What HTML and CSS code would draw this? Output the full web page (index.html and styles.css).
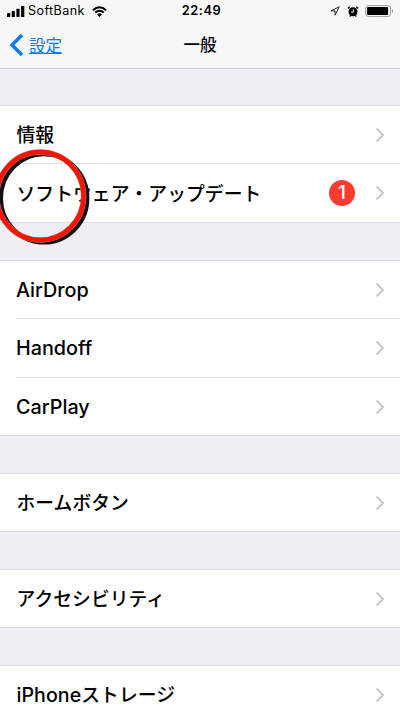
FILE: index.html
```html
<!DOCTYPE html>
<html lang="ja">
<head>
<meta charset="utf-8">
<title>一般</title>
<link rel="stylesheet" href="styles.css">
</head>
<body>
<svg width="0" height="0" class="defs"><symbol id="chev" viewBox="0 0 10 16"><path d="M1.5 1.5 8 8 1.5 14.5" fill="none" stroke="#c5c5cb" stroke-width="1.9"/></symbol></svg>
<main class="screen">
  <header class="header">
    <div class="status">
      <div class="carrier">
        <svg width="18" height="11" viewBox="0 0 18 11"><rect x="0" y="7" width="3.2" height="4" rx=".6"/><rect x="4.7" y="5" width="3.2" height="6" rx=".6"/><rect x="9.4" y="2.7" width="3.2" height="8.3" rx=".6"/><rect x="14.1" y="0" width="3.2" height="11" rx=".6"/></svg>
        <span class="carrier-name">SoftBank</span>
        <svg class="wifi" width="15" height="11" viewBox="0 0 15 11"><path d="M.9 4.2Q7.5-1.7 14.1 4.2M3.2 6.6Q7.5 2.9 11.8 6.6" fill="none" stroke="#000" stroke-width="2"/><path d="M5 8.4Q7.5 6.3 10 8.4L7.5 10.9Z"/></svg>
      </div>
      <span class="time">22:49</span>
      <div class="indicators">
        <svg width="10" height="10" viewBox="0 0 10 10"><path d="M.9 4.9 9.2.8 5.1 9.2V4.9Z" fill="none" stroke="#222" stroke-width="1"/></svg>
        <svg class="alarm" width="12" height="11" viewBox="0 0 12 11"><circle cx="6" cy="5.8" r="4.5"/><path d="M.9 2.5 2.8.8M9.2.8l1.9 1.7M2.7 10.5l1-1.2M9.3 10.5l-1-1.2" stroke="#000" stroke-width="1.3"/><path d="M6.3 3.3V6.2H4" fill="none" stroke="#f7f7f7" stroke-width="1"/></svg>
        <svg class="battery" width="29" height="12" viewBox="0 0 29 12"><rect x=".6" y=".6" width="25" height="10.8" rx="2.6" fill="#fff" stroke="#999" stroke-width="1"/><rect x="2.1" y="2" width="21" height="8" rx=".8"/><path d="M27 4Q29 6 27 8Z" fill="#888"/></svg>
      </div>
    </div>
    <nav class="nav">
      <a class="back"><svg width="15" height="24" viewBox="0 0 15 24"><path d="M13 2 3 12 13 22" fill="none" stroke="#087aff" stroke-width="3.4"/></svg><span class="back-label">設定</span></a>
      <h1 class="title">一般</h1>
      <span></span>
    </nav>
  </header>
  <section class="group">
    <div class="row"><span class="ja">情報</span><svg class="chevron"><use href="#chev"/></svg></div>
    <div class="row"><span class="ja">ソフトウェア・アップデート</span><span class="badge">1</span><svg class="chevron"><use href="#chev"/></svg></div>
    <svg class="marker" width="100" height="102" viewBox="0 0 100 102"><ellipse cx="52" cy="52.2" rx="43.2" ry="44.2" fill="none" stroke="#111" stroke-width="4.4"/><ellipse cx="48.2" cy="50" rx="43.4" ry="44" fill="none" stroke="#bb7770" stroke-width="5.4"/><ellipse cx="48.2" cy="50" rx="43.4" ry="44" fill="none" stroke="#fb1203" stroke-width="4.4"/></svg>
  </section>
  <section class="group latin">
    <div class="row"><span>AirDrop</span><svg class="chevron"><use href="#chev"/></svg></div>
    <div class="row tall"><span>Handoff</span><svg class="chevron"><use href="#chev"/></svg></div>
    <div class="row"><span>CarPlay</span><svg class="chevron"><use href="#chev"/></svg></div>
  </section>
  <section class="group single">
    <div class="row"><span class="ja">ホームボタン</span><svg class="chevron"><use href="#chev"/></svg></div>
  </section>
  <section class="group single">
    <div class="row"><span class="ja">アクセシビリティ</span><svg class="chevron"><use href="#chev"/></svg></div>
  </section>
  <section class="group single">
    <div class="row"><span class="ja mixed"><span class="word">iPhone</span>ストレージ</span><svg class="chevron"><use href="#chev"/></svg></div>
  </section>
</main>
</body>
</html>
```
FILE: styles.css
```css
* { box-sizing: border-box; }
body { margin: 0; background: #efeef4; color: #000; font-family: Inter, "Noto Sans CJK JP", sans-serif; }
svg { display: block; flex: none; }
.defs { position: absolute; }
.screen { height: 711px; overflow: hidden; }
.header { height: 69px; background: #f7f7f7; border-bottom: 1px solid #c9c8d4; }
.status { height: 22px; display: grid; grid-template-columns: 1fr auto 1fr; align-items: center; padding: 0 6px 0 7px; }
.carrier { display: flex; align-items: center; }
.carrier-name { font-size: 12.6px; line-height: 20px; margin-left: 3px; letter-spacing: .4px; font-weight: 400; }
.wifi { margin-left: 7px; }
.time { font-size: 12.8px; line-height: 20px; font-weight: 600; letter-spacing: .6px; padding-left: 2px; }
.indicators { display: flex; justify-content: flex-end; align-items: center; }
.alarm { margin-left: 7px; }
.battery { margin-left: 6px; }
.nav { height: 46px; display: grid; grid-template-columns: 1fr auto 1fr; align-items: center; padding: 0 8px; }
.back { display: flex; align-items: center; color: #087aff; font-size: 16.5px; line-height: 24px; gap: 5px; padding-left: 1px; text-decoration: underline; }
.back-label { padding-top: 1px; }
.title { font-size: 16.5px; line-height: 24px; font-weight: 500; margin: 0; }
.group { position: relative; margin-top: 36px; background: #fff; border: solid #dcdce0; border-width: 1px 0; }
.group + .group { margin-top: 37px; }
.row { height: 58px; margin-left: 16px; padding-right: 15px; display: flex; align-items: center; justify-content: space-between; border-bottom: 1px solid #e1e1e4; font-size: 18.8px; line-height: 28px; font-weight: 500; }
.row:nth-of-type(2):not(.tall) { border-bottom: 0; }
.row.tall { height: 59px; }
.latin .row:nth-of-type(3), .single .row { height: 57px; border-bottom: 0; }
.latin .row { font-size: 19.8px; font-weight: 500; }
.ja { padding: 3px 0 0 .5px; letter-spacing: .05px; }
.mixed { padding-top: 1px; }
.word { font-size: 19.6px; font-weight: 500; }
.chevron { width: 10px; height: 16px; }
.badge { margin-left: auto; margin-right: 20px; width: 26px; height: 26px; border-radius: 50%; background: #ff3b30; color: #fff; font-size: 19px; line-height: 26px; text-align: center; }
.marker { position: absolute; left: -8px; top: 40px; }
```
